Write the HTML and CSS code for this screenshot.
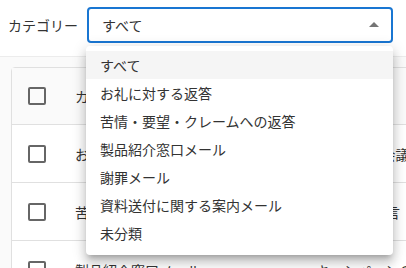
FILE: index.html
```html
<!DOCTYPE html>
<html lang="ja">
<head>
    <meta charset="UTF-8">
    <meta name="viewport" content="width=device-width, initial-scale=1.0">
    <title>テンプレート一覧</title>
    <link rel="stylesheet" href="styles.css">
</head>
<body>
    <div class="filter-bar">
        <span class="filter-label">カテゴリー</span>
        <div class="select">
            <span class="select-value">すべて</span>
            <svg class="select-icon" viewBox="0 0 24 24" width="24" height="24">
                <path d="M7 14l5-5 5 5z"></path>
            </svg>
        </div>
    </div>

    <div class="content">
        <div class="card">
            <table class="template-table">
                <tr class="head-row">
                    <td class="check-cell"><span class="checkbox"></span></td>
                    <td class="name-cell">カテゴリー</td>
                    <td>件名</td>
                </tr>
                <tr>
                    <td class="check-cell"><span class="checkbox"></span></td>
                    <td class="name-cell">お礼に対する返答</td>
                    <td>Re: 先日の会議</td>
                </tr>
                <tr>
                    <td class="check-cell"><span class="checkbox"></span></td>
                    <td class="name-cell">苦情・要望・クレームへの返答</td>
                    <td>ご意見・提言</td>
                </tr>
                <tr>
                    <td class="check-cell"><span class="checkbox"></span></td>
                    <td class="name-cell">製品紹介窓口メール</td>
                    <td>キャンペーンのご案内</td>
                </tr>
            </table>
        </div>
    </div>

    <!-- 開いているカテゴリーのメニュー -->
    <ul class="menu">
        <li class="menu-item selected">すべて</li>
        <li class="menu-item">お礼に対する返答</li>
        <li class="menu-item">苦情・要望・クレームへの返答</li>
        <li class="menu-item">製品紹介窓口メール</li>
        <li class="menu-item">謝罪メール</li>
        <li class="menu-item">資料送付に関する案内メール</li>
        <li class="menu-item">未分類</li>
    </ul>
</body>
</html>
```

FILE: styles.css
```css
body {
    margin: 0;
    width: 406px;
    height: 268px;
    overflow: hidden;
    position: relative;
    font-family: "Noto Sans CJK JP", "Noto Sans", sans-serif;
    font-size: 14px;
    color: #333;
    background: #fff;
}
.filter-bar {
    display: flex;
    align-items: center;
    height: 57px;
    padding: 0 13px 0 8px;
    box-sizing: border-box;
    border-bottom: 1px solid #ececec;
    padding-bottom: 7px;
}
.filter-label {
    width: 79px;
    flex-shrink: 0;
}
.select {
    flex: 1;
    height: 36px;
    box-sizing: border-box;
    border: 2px solid #1976d2;
    border-radius: 4px;
    display: flex;
    align-items: center;
    padding: 0 5px 0 13px;
}
.select-value {
    flex: 1;
}
.select-icon {
    fill: #757575;
}
.content {
    background: #fafafa;
    padding: 10px 0 0 11px;
    height: 300px;
}
.card {
    width: 440px;
    background: #fff;
    border: 1px solid #e0e0e0;
    border-radius: 4px;
}
.template-table {
    width: 100%;
    border-collapse: collapse;
    table-layout: fixed;
}
.template-table td {
    height: 57px;
    padding: 0;
    border-bottom: 1px solid #e0e0e0;
    white-space: nowrap;
    overflow: hidden;
}
.template-table .head-row td {
    height: 56px;
    background: #fafafa;
}
.check-cell {
    width: 63px;
    padding-left: 0;
}
.name-cell {
    width: 241px;
}
.checkbox {
    display: block;
    width: 14px;
    height: 14px;
    margin-left: 16px;
    border: 2px solid #666;
    border-radius: 2px;
}
.menu {
    position: absolute;
    left: 86px;
    top: 46px;
    width: 307px;
    margin: 0;
    padding: 5px 0 8px;
    list-style: none;
    background: #fff;
    border-radius: 4px;
    box-shadow: 0 5px 5px -3px rgba(0,0,0,0.2), 0 8px 10px 1px rgba(0,0,0,0.14), 0 3px 14px 2px rgba(0,0,0,0.12);
}
.menu-item {
    height: 28px;
    line-height: 28px;
    padding: 0 14px;
}
.menu-item.selected {
    background: #f5f5f5;
}
```
